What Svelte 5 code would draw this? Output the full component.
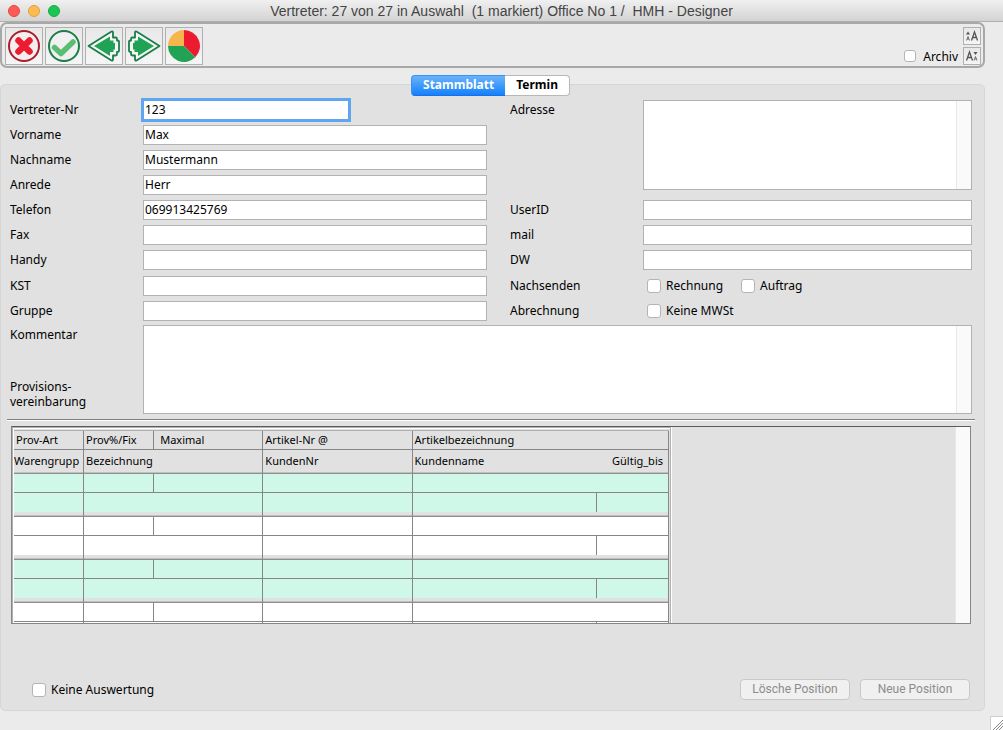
<script>
	let tab = $state('Stammblatt');

	const person = [
		{ id: 'nr', label: 'Vertreter-Nr', value: '123', short: true },
		{ id: 'vorname', label: 'Vorname', value: 'Max' },
		{ id: 'nachname', label: 'Nachname', value: 'Mustermann' },
		{ id: 'anrede', label: 'Anrede', value: 'Herr' },
		{ id: 'telefon', label: 'Telefon', value: '069913425769' },
		{ id: 'fax', label: 'Fax', value: '' },
		{ id: 'handy', label: 'Handy', value: '' }
	];
	const group = [
		{ id: 'kst', label: 'KST', value: '' },
		{ id: 'gruppe', label: 'Gruppe', value: '' }
	];
	const contact = [
		{ id: 'userid', label: 'UserID', value: '' },
		{ id: 'mail', label: 'mail', value: '' },
		{ id: 'dw', label: 'DW', value: '' }
	];
	const positions = [1, 2, 3, 4];
	const columns = [70, 70, 109, 149, 184, 72];
</script>

{#snippet field(f)}
	<div class="row">
		<label for={f.id}>{f.label}</label>
		<input id={f.id} class:short={f.short} type="text" value={f.value} />
	</div>
{/snippet}

<div class="window">
	<header class="titlebar">
		<div class="lights">
			<button class="red" aria-label="Schließen"></button>
			<button class="yellow" aria-label="Minimieren"></button>
			<button class="green" aria-label="Zoomen"></button>
		</div>
		<h1>Vertreter: 27 von 27 in Auswahl&nbsp; (1 markiert) Office No 1 /&nbsp; HMH - Designer</h1>
	</header>

	<div class="toolbar">
		<div class="tools">
			<button aria-label="Abbrechen">
				<svg viewBox="0 0 36 36">
					<circle cx="18" cy="18" r="15" fill="#f6eeee" stroke="#a91e2b" stroke-width="2" />
					<path d="M12.500 12.500l11 11m0-11l-11 11" stroke="#ed1b2f" stroke-width="6.500" stroke-linecap="round" />
				</svg>
			</button>
			<button aria-label="Sichern">
				<svg viewBox="0 0 36 36">
					<circle cx="18" cy="18" r="15" fill="#f0f0f0" stroke="#1b7d47" stroke-width="2" />
					<path d="M8.500 19.500l6.500 6L27 14" fill="none" stroke="#5bbd72" stroke-width="5.500" stroke-linecap="round" stroke-linejoin="round" />
				</svg>
			</button>
			<button aria-label="Vorheriger">
				<svg viewBox="0 0 36 36">
					<path d="M2.500 18L25.500 3.500q1.500-.5 1.500 1V9.500h2.500q1.500 0 1.500 1.500v1.500q2 0 2 1.500v8.500q0 1.500-2 1.500V26q0 1.500-1.500 1.500H27v4q0 1.500-1.500 1z" fill="#f6f6f6" stroke="#1b7d47" stroke-width="1.800" stroke-linejoin="round" />
					<path d="M8 18L24 8.500v4h3.500V15H29v6.500h-1.500V24H24v4z" fill="#21a355" />
				</svg>
			</button>
			<button aria-label="Nächster">
				<svg viewBox="0 0 36 36">
					<g transform="matrix(-1 0 0 1 36 0)">
						<path d="M2.500 18L25.500 3.500q1.500-.5 1.500 1V9.500h2.500q1.500 0 1.500 1.500v1.500q2 0 2 1.500v8.500q0 1.500-2 1.500V26q0 1.500-1.500 1.500H27v4q0 1.500-1.500 1z" fill="#f6f6f6" stroke="#1b7d47" stroke-width="1.800" stroke-linejoin="round" />
						<path d="M8 18L24 8.500v4h3.500V15H29v6.500h-1.500V24H24v4z" fill="#21a355" />
					</g>
				</svg>
			</button>
			<button aria-label="Statistik">
				<svg viewBox="0 0 36 36">
					<path d="M18 18V2a16 16 0 0 1 11.300 27.300z" fill="#ed1b2f" />
					<path d="M18 18l11.300 11.300A16 16 0 0 1 2 18z" fill="#21a355" />
					<path d="M18 18H2A16 16 0 0 1 18 2z" fill="#f7b54e" />
				</svg>
			</button>
		</div>
		<label class="check archiv"><input type="checkbox" /> Archiv</label>
		<div class="sizes">
			<button aria-label="Schrift größer">
				<svg viewBox="0 0 16 16" fill="none" stroke="#555">
					<path d="M7.500 12.500L10.500 4L13.500 12.500M8.500 9.500h4" stroke-width="1.300" />
					<path d="M2.500 12.500L4 8.500L5.500 12.500M3 11h2" stroke-width=".8" />
					<path d="M2 6.500L4 3.500L6 6.500z" fill="#555" stroke="none" />
				</svg>
			</button>
			<button aria-label="Schrift kleiner">
				<svg viewBox="0 0 16 16" fill="none" stroke="#555">
					<path d="M2.500 12.500L5.500 4L8.500 12.500M3.500 9.500h4" stroke-width="1.300" />
					<path d="M10 12.500L11.500 8.500L13 12.500M10.500 11h2" stroke-width=".8" />
					<path d="M9.500 4L11.500 7L13.500 4z" fill="#555" stroke="none" />
				</svg>
			</button>
		</div>
	</div>

	<main class="panel">
		<div class="tabs" role="tablist">
			{#each ['Stammblatt', 'Termin'] as name}
				<button role="tab" aria-selected={tab === name} onclick={() => (tab = name)}>{name}</button>
			{/each}
		</div>

		<div class="form">
			<div class="column">
				<div class="group">
					{#each person as f}{@render field(f)}{/each}
				</div>
				<div class="group">
					{#each group as f}{@render field(f)}{/each}
				</div>
			</div>
			<div class="column">
				<div class="group">
					<div class="row adresse">
						<label for="adresse">Adresse</label>
						<textarea id="adresse"></textarea>
					</div>
					{#each contact as f}{@render field(f)}{/each}
				</div>
				<div class="group">
					<div class="row">
						<span class="caption">Nachsenden</span>
						<div class="checks">
							<label class="check"><input type="checkbox" /><span>Rechnung</span></label>
							<label class="check"><input type="checkbox" /><span>Auftrag</span></label>
						</div>
					</div>
					<div class="row">
						<span class="caption">Abrechnung</span>
						<div class="checks">
							<label class="check"><input type="checkbox" /><span>Keine MWSt</span></label>
						</div>
					</div>
				</div>
			</div>
		</div>

		<div class="row kommentar">
			<div class="captions">
				<label for="kommentar">Kommentar</label>
				<span>Provisions-<br />vereinbarung</span>
			</div>
			<textarea id="kommentar"></textarea>
		</div>

		<hr />

		<div class="list">
			<div class="sheet">
				<table>
					<colgroup>
						{#each columns as width}<col style="width: {width}px" />{/each}
					</colgroup>
					<thead>
						<tr>
							<th>Prov-Art</th>
							<th>Prov%/Fix</th>
							<th class="wide">Maximal</th>
							<th>Artikel-Nr @</th>
							<th colspan="2">Artikelbezeichnung</th>
						</tr>
						<tr>
							<th class="tight">Warengrupp</th>
							<th colspan="2">Bezeichnung</th>
							<th>KundenNr</th>
							<th class="open">Kundenname</th>
							<th class="end">Gültig_bis</th>
						</tr>
					</thead>
					{#each positions as position}
						<tbody>
							<tr class="upper">
								<td></td><td></td><td></td><td></td><td colspan="2"></td>
							</tr>
							<tr class="lower">
								<td></td><td colspan="2"></td><td></td><td></td><td></td>
							</tr>
							<tr class="rule">
								<td></td><td colspan="2"></td><td></td><td colspan="2"></td>
							</tr>
						</tbody>
					{/each}
				</table>
			</div>
			<div class="track"></div>
		</div>

		<div class="actions">
			<label class="check"><input type="checkbox" /> Keine Auswertung</label>
			<div class="buttons">
				<button disabled>Lösche Position</button>
				<button disabled>Neue Position</button>
			</div>
		</div>
	</main>

	<footer>
		<svg class="grip" viewBox="0 0 13 14">
			<path d="M0 14V0h13v14z" fill="#fff" />
			<path d="M.5 14V.5H13" fill="none" stroke="#ccc" />
			<path d="M3 14L13 4M6 14l7-7M9 14l4-4" stroke="#888" />
		</svg>
	</footer>
</div>

<style>
	:global(body) {
		margin: 0;
		background: #ebebeb;
	}

	.window {
		box-sizing: border-box;
		min-height: 100vh;
		display: flex;
		flex-direction: column;
		background: #ebebeb;
		color: #000;
		font-family: 'Noto Sans', 'Open Sans', sans-serif;
		font-size: 12px;
		line-height: 15px;
	}

	button,
	input,
	textarea {
		box-sizing: border-box;
		margin: 0;
		font: inherit;
		color: inherit;
	}

	/* Title bar */
	.titlebar {
		position: relative;
		height: 21px;
		display: flex;
		align-items: center;
		justify-content: center;
		border-bottom: 1px solid #b0b0b0;
		background: linear-gradient(#f0f0f0, #d3d3d3);
	}

	.lights {
		position: absolute;
		left: 8px;
		display: flex;
		gap: 8px;
	}

	.lights button {
		width: 12px;
		height: 12px;
		padding: 0;
		border: 1px solid #e2463f;
		border-radius: 50%;
		background: #fc5b57;
	}

	.lights .yellow {
		border-color: #e0a03c;
		background: #fdbc4f;
	}

	.lights .green {
		border-color: #12ac44;
		background: #1bc656;
	}

	h1 {
		margin: 0;
		padding-top: 1px;
		font: 14px/20px 'Liberation Sans', sans-serif;
		color: #444;
		white-space: nowrap;
	}

	/* Toolbar */
	.toolbar {
		display: flex;
		align-items: flex-end;
		margin-right: 18px;
		padding: 3px 2px 1px 3px;
		border: 2px solid #a8a8a8;
		border-radius: 7px;
	}

	.tools {
		display: flex;
		gap: 2px;
	}

	.tools button,
	.sizes button {
		display: block;
		width: 38px;
		height: 38px;
		padding: 0;
		border: 1px solid #b0b0b0;
		background: linear-gradient(#e8e8e8, #f5f5f5);
	}

	svg {
		display: block;
	}

	.sizes {
		display: flex;
		flex-direction: column;
		gap: 2px;
	}

	.sizes button {
		width: 18px;
		height: 18px;
	}

	/* Checkboxes */
	.check {
		display: flex;
		align-items: center;
		gap: 5px;
		height: 20px;
	}

	.check input {
		appearance: none;
		width: 14px;
		height: 14px;
		border: 1px solid #b4b4b4;
		border-radius: 3px;
		background: #fff;
	}

	.check.archiv {
		height: 18px;
		margin-left: auto;
		margin-right: 5px;
	}

	.archiv input {
		width: 12px;
		height: 12px;
		margin-right: 2px;
	}

	/* Panel */
	.panel {
		position: relative;
		margin: 16px 18px 0 0;
		padding: 15px 12px 10px 9px;
		border: 1px solid #d6d6d6;
		border-radius: 5px;
		background: #e1e1e1;
	}

	.tabs {
		position: absolute;
		top: -10px;
		left: 0;
		right: 4px;
		display: flex;
		justify-content: center;
	}

	.tabs button {
		height: 21px;
		padding: 0 11px 2px;
		border: 1px solid #b8b8b8;
		border-left: 0;
		border-radius: 0 4px 4px 0;
		background: #fff;
		font-weight: bold;
	}

	.tabs button:first-child {
		border-left: 1px solid #b8b8b8;
		border-right: 0;
		border-radius: 4px 0 0 4px;
	}

	.tabs button[aria-selected='true'] {
		border-color: #3a93f3;
		border-bottom-color: #1a6fe8;
		background: linear-gradient(#6bb3f8, #1381fc);
		color: #fff;
	}

	.form {
		display: grid;
		grid-template-columns: 477fr 462fr;
		gap: 23px;
	}

	.column {
		display: flex;
		flex-direction: column;
		gap: 6px;
	}

	.group {
		display: flex;
		flex-direction: column;
		gap: 5px;
	}

	.row {
		display: flex;
		align-items: center;
	}

	.row > label,
	.caption,
	.checks span {
		padding-bottom: 2px;
	}

	.row > label,
	.caption,
	.captions {
		flex: 0 0 133px;
	}

	.row input[type='text'],
	textarea {
		flex: 1;
		min-width: 0;
		height: 20px;
		padding: 0 1px 2px;
		border: 1px solid #b2b2b2;
		border-radius: 0;
		outline: 0;
		background: #fff;
	}

	.row input.short {
		flex: 0 1 206px;
		border-color: #5ea6f0;
		box-shadow: 0 0 0 2px #5ea6f0;
	}

	.row textarea {
		display: block;
		resize: none;
		height: 90px;
		/* scroller strip along the right edge */
		background: linear-gradient(to right, #e8e8e8 1px, #fafafa 1px) right / 15px 100% no-repeat #fff;
	}

	.adresse {
		align-items: flex-start;
		margin-bottom: 5px;
	}

	.adresse label {
		padding-top: 2px;
	}

	.checks {
		display: flex;
		gap: 18px;
		padding-left: 4px;
	}

	.kommentar {
		align-items: stretch;
		margin-top: 4px;
	}

	.kommentar textarea {
		height: 89px;
	}

	.captions {
		display: flex;
		flex-direction: column;
		justify-content: space-between;
		padding: 2px 0 5px;
		box-sizing: border-box;
	}

	hr {
		height: 1px;
		margin: 5px -3px 5px;
		border: 0;
		border-top: 1px solid #808080;
		background: #fff;
	}

	/* Position list */
	.list {
		display: flex;
		justify-content: space-between;
		box-sizing: border-box;
		height: 198px;
		margin: 0 1px;
		overflow: hidden;
		border: 1px solid #868686;
		border-top-color: #5a5a5a;
	}

	.sheet {
		padding: 2px 1px 0;
		border: 1px solid #b0b0b0;
		border-bottom: 0;
		box-shadow: inset 1px 1px #fff, 1px 0 #fff;
	}

	.track {
		width: 14px;
		border-left: 1px solid #e8e8e8;
		background: #fafafa;
	}

	table {
		width: 655px;
		table-layout: fixed;
		border-spacing: 0;
		border-top: 1px solid #b0b0b0;
		font-size: 11px;
	}

	th,
	td {
		box-sizing: border-box;
		height: 19px;
		padding: 0;
		border-right: 1px solid #868686;
		border-bottom: 1px solid #868686;
	}

	th {
		padding: 0 2px 1px;
		font-weight: normal;
		text-align: left;
		white-space: nowrap;
	}

	thead tr:last-child th {
		height: 24px;
		padding-bottom: 2px;
	}

	thead tr:last-child th,
	.rule td {
		border-bottom: 1px solid #8f8f8f;
		box-shadow: inset 0 -1px #c0c0c0;
	}

	th.tight {
		padding: 0;
	}

	th.wide {
		padding-left: 6px;
	}

	th.open {
		border-right: 0;
	}

	th.end {
		padding-right: 5px;
		text-align: right;
	}

	.upper td,
	.lower td {
		background: #fff;
	}

	tbody:nth-of-type(odd) .upper td,
	tbody:nth-of-type(odd) .lower td {
		background: #d0f8e8;
	}

	.lower td {
		border-bottom: 0;
	}

	.rule td {
		height: 5px;
	}

	/* Bottom of panel */
	.actions {
		display: flex;
		justify-content: space-between;
		align-items: center;
		margin-top: 55px;
		padding: 0 2px 0 22px;
	}

	.buttons {
		display: flex;
		gap: 10px;
	}

	.buttons button {
		width: 110px;
		height: 21px;
		padding: 0;
		border: 1px solid #c8c8c8;
		border-radius: 4px;
		background: #f0f0f0;
		color: #8c8c8c;
		font-family: Roboto, sans-serif;
	}

	footer {
		display: flex;
		justify-content: flex-end;
		margin-top: auto;
	}

	.grip {
		width: 13px;
		height: 14px;
	}
</style>
